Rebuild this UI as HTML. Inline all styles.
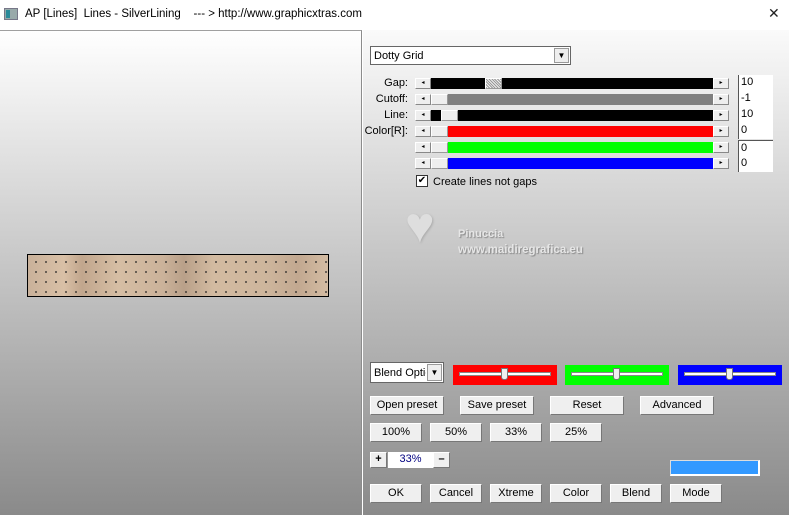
<!DOCTYPE html>
<html><head><meta charset="utf-8"><style>
*{margin:0;padding:0;box-sizing:border-box}
body{width:789px;height:515px;overflow:hidden;background:#fff;font-family:"Liberation Sans",sans-serif;font-size:11px;color:#000;position:relative}
.a{position:absolute}
#left{left:0;top:30px;width:362px;height:485px;background:linear-gradient(#fff,#8a8a8a);border-top:1px solid #a0a0a0;border-right:1px solid #8c8c8c}
#right{left:363px;top:30px;width:426px;height:485px;background:linear-gradient(#fafafa,#8a8a8a)}
.btn{position:absolute;background:#efefef;border:1px solid #fff;border-right-color:#777;border-bottom-color:#777;text-align:center;font-size:11px;line-height:17px;height:19px}
.arr{position:absolute;width:16px;height:11px;background:#eee;border:1px solid #fff;border-right-color:#888;border-bottom-color:#888;font-size:6px;line-height:9px;text-align:center}
.trk{position:absolute;left:431px;width:282px;height:11px}
.thumb{position:absolute;top:0;height:11px;width:17px;background:#eee;border:1px solid #fff;border-right-color:#999;border-bottom-color:#999}
.lbl{position:absolute;right:381px;font-size:11px;text-align:right}
.val{position:absolute;left:738px;width:35px;height:16px;background:#fff;border-left:1px solid #555;font-size:11px;line-height:14px;padding-left:2px}
.cs{position:absolute;top:365px;height:20px;width:104px}
.cs .l{position:absolute;left:6px;right:6px;top:7px;height:4px;background:#fff;border:1px solid #888}
.cs .t{position:absolute;top:3px;width:7px;height:12px;background:#eee;border:1px solid #777;border-radius:0 0 3px 3px}
</style></head><body>
<div class="a" style="left:4px;top:8px;width:14px;height:12px;background:#9aa;border:1px solid #778"><div style="position:absolute;left:1px;top:1px;width:4px;height:8px;background:#2a8a9a"></div></div>
<div class="a" style="left:25px;top:8px;font-size:11.5px;white-space:pre">AP [Lines]  Lines - SilverLining    --- &gt; http://www.graphicxtras.com</div>
<div class="a" style="left:768px;top:5px;font-size:14px;color:#222">✕</div>
<div class="a" id="left"></div>
<div class="a" id="right"></div>
<div class="a" style="left:27px;top:254px;width:302px;height:43px;border:1px solid #000;background:linear-gradient(90deg,#c9b19a,#d9c0a6 12%,#c1a68d 18%,#d6bea4 30%,#cbb29a 45%,#b9a089 52%,#d3bba1 62%,#cdb59c 80%,#c2a890 90%,#d4bca3);">
<div style="position:absolute;inset:0;background-image:radial-gradient(circle,#222 0.7px,transparent 1px);background-size:10px 10px;background-position:3px 2px"></div></div>
<div class="a" style="left:370px;top:46px;width:201px;height:19px;background:#fff;border:1px solid #666"><span style="position:absolute;left:3px;top:3px">Dotty Grid</span><div style="position:absolute;right:1px;top:1px;width:15px;height:15px;background:#eee;border:1px solid #999;font-size:8px;text-align:center;line-height:14px">▼</div></div>
<div class="lbl" style="top:77px">Gap:</div>
<div class="lbl" style="top:93px">Cutoff:</div>
<div class="lbl" style="top:109px">Line:</div>
<div class="lbl" style="top:125px">Color[R]:</div>
<div class="arr" style="left:415px;top:78px">◂</div><div class="trk" style="top:78px;background:#000"><div class="thumb" style="left:54px;background:repeating-linear-gradient(45deg,#999 0 1px,#eee 1px 2px)"></div></div><div class="arr" style="left:713px;top:78px">▸</div>
<div class="arr" style="left:415px;top:94px">◂</div><div class="trk" style="top:94px;background:#808080"><div class="thumb" style="left:0"></div></div><div class="arr" style="left:713px;top:94px">▸</div>
<div class="arr" style="left:415px;top:110px">◂</div><div class="trk" style="top:110px;background:#000"><div class="thumb" style="left:10px"></div></div><div class="arr" style="left:713px;top:110px">▸</div>
<div class="arr" style="left:415px;top:126px">◂</div><div class="trk" style="top:126px;background:#f00"><div class="thumb" style="left:0"></div></div><div class="arr" style="left:713px;top:126px">▸</div>
<div class="arr" style="left:415px;top:142px">◂</div><div class="trk" style="top:142px;background:#0f0"><div class="thumb" style="left:0"></div></div><div class="arr" style="left:713px;top:142px">▸</div>
<div class="arr" style="left:415px;top:158px">◂</div><div class="trk" style="top:158px;background:#00f"><div class="thumb" style="left:0"></div></div><div class="arr" style="left:713px;top:158px">▸</div>
<div class="val" style="top:75px">10</div><div class="val" style="top:91px">-1</div><div class="val" style="top:107px">10</div><div class="val" style="top:123px">0</div>
<div class="val" style="top:140px;border-top:1px solid #555">0</div><div class="val" style="top:156px">0</div>
<div class="a" style="left:416px;top:175px;width:12px;height:12px;background:#fff;border:1px solid #333;font-size:10px;line-height:10px;text-align:center">✔</div>
<div class="a" style="left:433px;top:176px">Create lines not gaps</div>
<div class="a" style="left:405px;top:200px;width:60px;height:60px;color:#dedede;font-size:50px;line-height:50px;text-shadow:1px 1px 2px #aaa">♥</div>
<div class="a" style="left:458px;top:228px;color:#e6e6e6;font-weight:bold;font-size:11px;text-shadow:1px 1px 1px #888">Pinuccia</div>
<div class="a" style="left:458px;top:244px;color:#e6e6e6;font-weight:bold;font-size:11.5px;text-shadow:1px 1px 1px #888">www.maidiregrafica.eu</div>
<div class="a" style="left:370px;top:362px;width:74px;height:21px;background:#fff;border:1px solid #666"><span style="position:absolute;left:3px;top:4px;white-space:nowrap;width:52px;overflow:hidden">Blend Options</span><div style="position:absolute;right:1px;top:1px;width:15px;height:17px;background:#eee;border:1px solid #999;font-size:8px;text-align:center;line-height:16px">▼</div></div>
<div class="cs" style="left:453px;background:#f00"><div class="l"></div><div class="t" style="left:48px"></div></div>
<div class="cs" style="left:565px;background:#0f0"><div class="l"></div><div class="t" style="left:48px"></div></div>
<div class="cs" style="left:678px;background:#00f"><div class="l"></div><div class="t" style="left:48px"></div></div>
<div class="btn" style="left:370px;top:396px;width:74px">Open preset</div>
<div class="btn" style="left:460px;top:396px;width:74px">Save preset</div>
<div class="btn" style="left:550px;top:396px;width:74px">Reset</div>
<div class="btn" style="left:640px;top:396px;width:74px">Advanced</div>
<div class="btn" style="left:370px;top:423px;width:52px">100%</div>
<div class="btn" style="left:430px;top:423px;width:52px">50%</div>
<div class="btn" style="left:490px;top:423px;width:52px">33%</div>
<div class="btn" style="left:550px;top:423px;width:52px">25%</div>
<div class="btn" style="left:370px;top:452px;width:17px;height:16px;line-height:13px;font-weight:bold">+</div>
<div class="a" style="left:388px;top:452px;width:45px;height:16px;background:#fff;color:#000080;text-align:center;line-height:15px">33%</div>
<div class="btn" style="left:433px;top:452px;width:17px;height:16px;line-height:13px;font-weight:bold">–</div>
<div class="a" style="left:670px;top:460px;width:90px;height:16px;background:#3399ff;border:1px solid #ddd;border-right:2px solid #fff;border-bottom:2px solid #fff"></div>
<div class="btn" style="left:370px;top:484px;width:52px">OK</div>
<div class="btn" style="left:430px;top:484px;width:52px">Cancel</div>
<div class="btn" style="left:490px;top:484px;width:52px">Xtreme</div>
<div class="btn" style="left:550px;top:484px;width:52px">Color</div>
<div class="btn" style="left:610px;top:484px;width:52px">Blend</div>
<div class="btn" style="left:670px;top:484px;width:52px">Mode</div>
</body></html>
